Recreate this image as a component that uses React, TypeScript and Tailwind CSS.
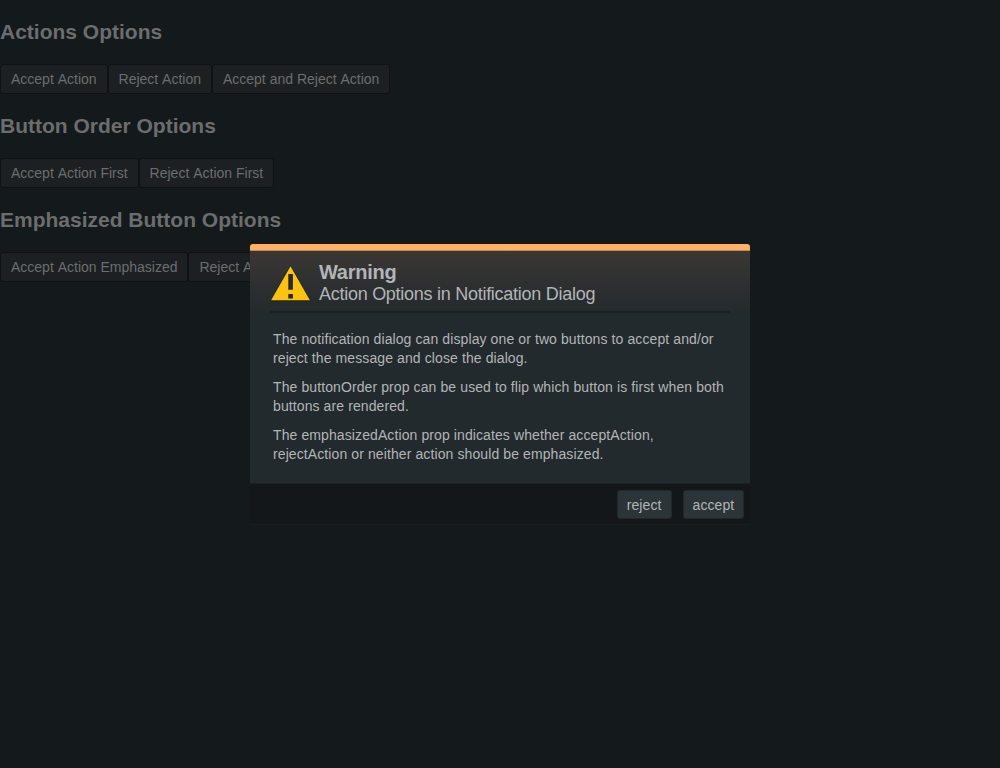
import type { ReactNode } from 'react';

const sections = [
  { title: 'Actions Options', buttons: ['Accept Action', 'Reject Action', 'Accept and Reject Action'] },
  { title: 'Button Order Options', buttons: ['Accept Action First', 'Reject Action First'] },
  { title: 'Emphasized Button Options', buttons: ['Accept Action Emphasized', 'Reject Action Emphasized'] },
];

function WarningIcon() {
  return (
    <svg className="h-[41px] w-[41px] shrink-0" viewBox="0 0 41 41" aria-hidden="true">
      <path d="M20.5 4 L41 40.5 H0 Z" fill="#1f2222" />
      <path d="M20.5 5.2 L39.9 39.3 H1.1 Z" fill="#ffc20e" />
      <path d="M18.3 13h4.6v15.8h-4.6zM18.3 33h4.6v4.6h-4.6z" fill="#25292a" />
    </svg>
  );
}

function FooterButton({ children }: { children: ReactNode }) {
  return (
    <button className="h-[29px] rounded-[3px] border border-[#22292b] bg-[#2d3438] px-[9px] text-sm leading-[14px] tracking-[0.1px] text-[#b2b5b6]">
      {children}
    </button>
  );
}

export default function App() {
  return (
    <div className="relative h-screen overflow-hidden bg-[#14191b] font-['Liberation_Sans',Arial,sans-serif] text-sm text-[#717374]">
      {sections.map((section) => (
        <section key={section.title}>
          <h3 className="flex h-16 items-center text-[21px] leading-6 font-bold text-[#6b6d6e]">{section.title}</h3>
          <div className="flex [font-kerning:none]">
            {section.buttons.map((label) => (
              <button
                key={label}
                className="h-[30px] shrink-0 rounded-[3px] border border-[#0f1214] bg-[#1c2022] px-[9.98px] text-sm leading-[14px] whitespace-nowrap text-[#6b6d6e]"
              >
                {label}
              </button>
            ))}
          </div>
        </section>
      ))}

      <div className="absolute inset-0 flex items-center justify-center pt-px">
        <div
          role="dialog"
          className="h-[281px] w-[500px] overflow-hidden rounded-[3px] bg-[#232a2d] text-[#b2b5b6]"
        >
          <div className="h-[7px] border-b border-[#c48a50] bg-[#ffb166]" />
          <div className="bg-linear-to-b from-[#3a3733] to-[#232a2d] px-5">
            <div className="flex h-[62px] items-start border-b-2 border-[#1b2022] pt-[10px]">
              <WarningIcon />
              <div className="ml-[8px]">
                <div className="text-[20px] leading-[22px] font-bold tracking-[-0.27px]">Warning</div>
                <div className="text-[18px] leading-[22px] tracking-[-0.27px]">Action Options in Notification Dialog</div>
              </div>
            </div>
          </div>
          <div className="flex h-[170px] flex-col gap-[10px] pt-[17px] pr-[20px] pl-[23px] text-sm leading-[19px] tracking-[0.1px]">
            <p>
              The notification dialog can display one or two buttons to accept and/or
              <br />
              reject the message and close the dialog.
            </p>
            <p>
              The buttonOrder prop can be used to flip which button is first when both
              <br />
              buttons are rendered.
            </p>
            <p>
              The emphasizedAction prop indicates whether acceptAction,
              <br />
              rejectAction or neither action should be emphasized.
            </p>
          </div>
          <div className="flex h-[42px] justify-end gap-[11px] rounded-b-[3px] border-t border-b border-t-[#1b2123] border-b-[#181d1f] bg-[#13171a] pt-[6px] pr-[5.65px]">
            <FooterButton>reject</FooterButton>
            <FooterButton>accept</FooterButton>
          </div>
        </div>
      </div>
    </div>
  );
}
